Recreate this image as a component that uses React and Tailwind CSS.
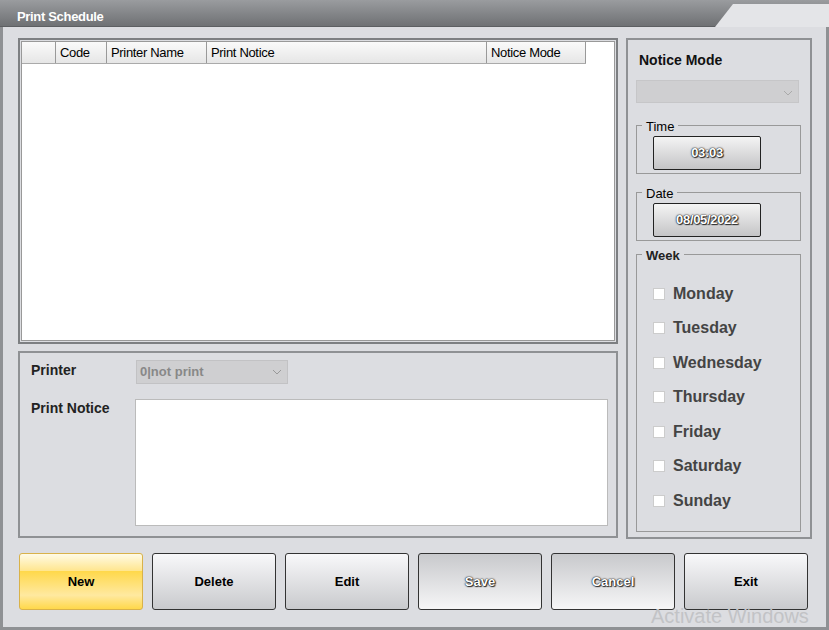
export default function App() {
  const days = ["Monday","Tuesday","Wednesday","Thursday","Friday","Saturday","Sunday"];
  const btn = "w-[124px] h-[57px] rounded-[3px] border border-[#333] flex items-center justify-center text-[13px] font-bold";
  const sh = "0 0 1px #000,0 0 2px #222,1px 1px 1px #333";
  return (
    <div className="w-[829px] h-[630px] bg-[#dcdde1] relative overflow-hidden" style={{fontFamily:'"Liberation Sans", Arial, sans-serif'}}>
      <div className="h-[27px] relative bg-gradient-to-b from-[#9a9c9f] to-[#6f7174] border-b border-[#5d5f62]">
        <div className="absolute right-0 top-[4px] w-[114px] h-[23px] bg-[#e4e5e8]" style={{clipPath:"polygon(18px 0,100% 0,100% 100%,0 100%)"}}></div>
        <span className="absolute left-[17px] top-[7px] text-[13px] font-bold text-white tracking-tight">Print Schedule</span>
      </div>
      <div className="absolute left-0 top-[27px] bottom-0 w-[3px] bg-[#8f9194]"></div>
      <div className="absolute right-0 top-[27px] bottom-0 w-[3px] bg-[#8f9194]"></div>
      <div className="absolute left-0 right-0 bottom-0 h-[3px] bg-[#8f9194]"></div>
      <div className="flex gap-[8px] pl-[18px] pt-[11px]">
        <div className="flex flex-col gap-[7px]">
          <div className="w-[600px] h-[306px] border-2 border-[#7d7f82] p-[1px] bg-[#dcdde1]">
            <div className="w-full h-full bg-white border border-[#999]">
              <div className="flex h-[22px] text-[13px] text-black w-[564px] border-b border-[#aaa] tracking-tight" style={{background:"linear-gradient(#fafafa,#e6e6e6)"}}>
                <div className="w-[34px] border-r border-[#999]"></div>
                <div className="w-[51px] border-r border-[#999] pl-[4px] leading-[21px]">Code</div>
                <div className="w-[100px] border-r border-[#999] pl-[4px] leading-[21px]">Printer Name</div>
                <div className="w-[280px] border-r border-[#999] pl-[4px] leading-[21px]">Print Notice</div>
                <div className="w-[99px] border-r border-[#999] pl-[4px] leading-[21px]">Notice Mode</div>
              </div>
            </div>
          </div>
          <div className="w-[600px] h-[187px] border-2 border-[#8f9194] relative">
            <span className="absolute left-[11px] top-[7px] text-[14px] font-bold text-[#222]">Printer</span>
            <div className="absolute left-[116px] top-[7px] w-[152px] h-[24px] bg-[#cfcfd1] border border-[#c2c2c4] text-[13px] font-bold text-[#888] pl-[3px] leading-[22px]">0|not print
              <svg className="absolute right-[5px] top-[8px]" width="10" height="6"><path d="M1 1l4 4 4-4" stroke="#999" fill="none"/></svg>
            </div>
            <span className="absolute left-[11px] top-[45px] text-[14px] font-bold text-[#222]">Print Notice</span>
            <div className="absolute left-[115px] top-[46px] w-[473px] h-[127px] bg-white border border-[#bbb]"></div>
          </div>
        </div>
        <div className="w-[186px] h-[501px] border-2 border-[#8f9194] relative">
          <span className="absolute left-[11px] top-[10px] text-[14px] font-bold text-[#111]">Notice Mode</span>
          <div className="absolute left-[8px] top-[40px] w-[163px] h-[23px] bg-[#cfcfd1] border border-[#c6c6c8]">
            <svg className="absolute right-[5px] top-[9px]" width="10" height="6"><path d="M1 1l4 4 4-4" stroke="#aaa" fill="none"/></svg>
          </div>
          {[["Time","03:03",85],["Date","08/05/2022",152]].map(([l,v,t])=>(
            <div key={l} className="absolute left-[8px] w-[165px] h-[49px] border border-[#999]" style={{top:t}}>
              <span className="absolute left-[5px] -top-[9px] px-[4px] bg-[#dcdde1] text-[13px] text-black">{l}</span>
              <div className="absolute left-[16px] top-[10px] w-[108px] h-[34px] rounded-[2px] border border-[#222] flex items-center justify-center text-[13px] font-bold text-white tracking-tight" style={{background:"linear-gradient(#f4f4f4,#c4c4c6)",textShadow:sh}}>{v}</div>
            </div>
          ))}
          <div className="absolute left-[8px] top-[214px] w-[165px] h-[278px] border border-[#999]">
            <span className="absolute left-[5px] -top-[9px] px-[4px] bg-[#dcdde1] text-[13px] font-bold text-[#222]">Week</span>
            <div className="absolute left-[16px] top-[29px] flex flex-col gap-[15.5px]">
              {days.map(d=>(
                <div key={d} className="flex items-center gap-[8px] h-[19px]">
                  <div className="w-[12px] h-[12px] bg-white border border-[#ccc]"></div>
                  <span className="text-[16px] font-bold text-[#444]">{d}</span>
                </div>
              ))}
            </div>
          </div>
        </div>
      </div>
      <div className="flex gap-[9px] pl-[19px] mt-[14px]">
        <div className={btn+" border-[#d9b24a]"} style={{background:"linear-gradient(#fffbe6 0%,#ffe690 30%,#ffd84a 31%,#ffe9a0 75%,#ffd84a 100%)"}}>New</div>
        <div className={btn} style={{background:"linear-gradient(#f8f8fa,#c9cacd)"}}>Delete</div>
        <div className={btn} style={{background:"linear-gradient(#f8f8fa,#c9cacd)"}}>Edit</div>
        <div className={btn+" text-white"} style={{background:"linear-gradient(#c8c9cc,#f6f6f7)",textShadow:sh}}>Save</div>
        <div className={btn+" text-white"} style={{background:"linear-gradient(#c8c9cc,#f6f6f7)",textShadow:sh}}>Cancel</div>
        <div className={btn} style={{background:"linear-gradient(#f8f8fa,#c9cacd)"}}>Exit</div>
      </div>
      <span className="absolute left-[651px] top-[601px] text-[20px] text-[#c2c3c6]">Activate Windows</span>
    </div>
  );
}
